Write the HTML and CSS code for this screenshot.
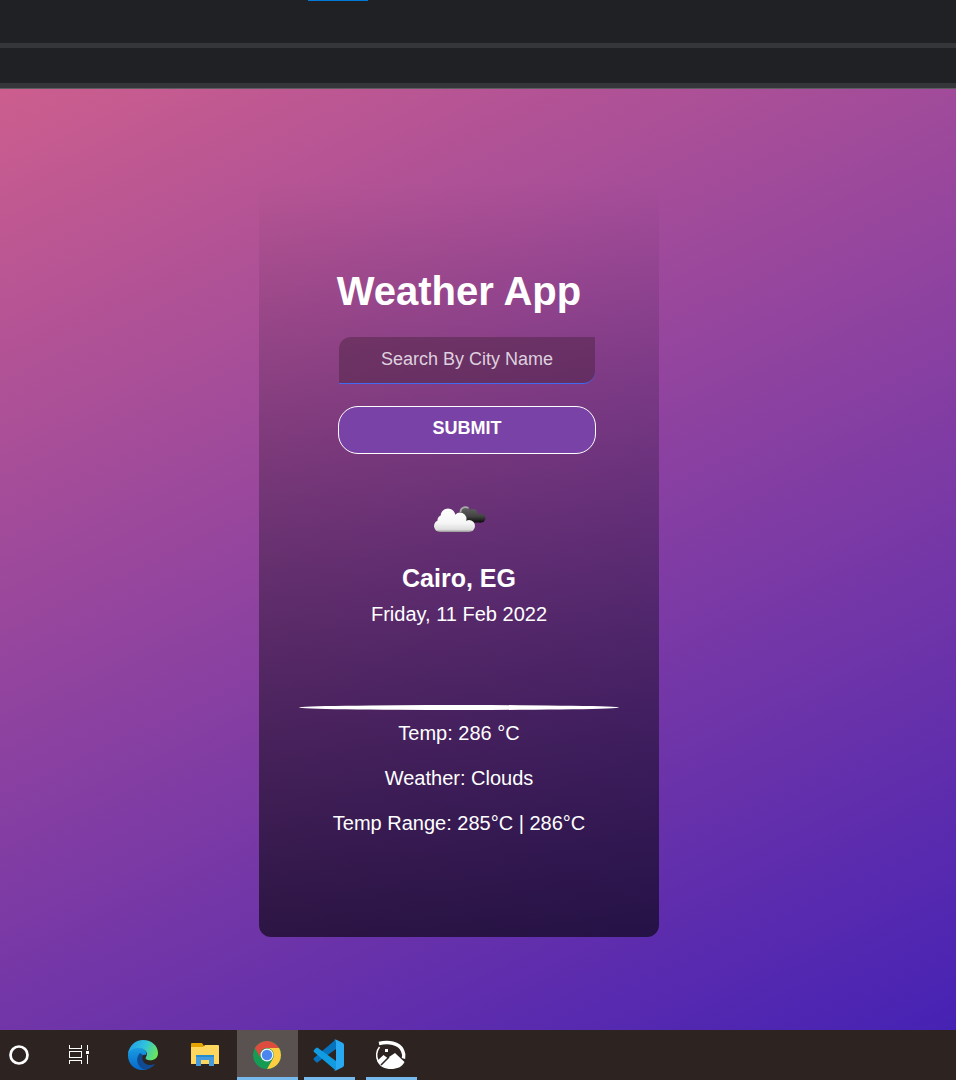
FILE: index.html
```html
<!DOCTYPE html>
<html lang="en">
<head>
<meta charset="utf-8">
<meta name="viewport" content="width=device-width, initial-scale=1">
<title>Weather App</title>
<link rel="stylesheet" href="styles.css">
</head>
<body>
<header class="browser">
  <div class="tab-strip"><span class="tab-accent"></span></div>
  <div class="toolbar"></div>
</header>
<main class="page">
  <section class="card">
    <h1 class="title">Weather App</h1>
    <form class="search">
      <input class="city-input" type="text" placeholder="Search By City Name" aria-label="Search By City Name">
      <button class="submit" type="submit">SUBMIT</button>
    </form>
    <svg class="cloud" viewBox="0 0 54 28" aria-hidden="true">
      <defs>
        <linearGradient id="dark" gradientUnits="userSpaceOnUse" x1="0" y1="1" x2="0" y2="18"><stop offset="0" stop-color="#666"/><stop offset=".6" stop-color="#444"/><stop offset="1" stop-color="#080808"/></linearGradient>
        <linearGradient id="light" gradientUnits="userSpaceOnUse" x1="0" y1="3" x2="0" y2="28"><stop offset="0" stop-color="#fff"/><stop offset=".6" stop-color="#f6f6f6"/><stop offset=".86" stop-color="#ddd"/><stop offset="1" stop-color="#777"/></linearGradient>
      </defs>
      <g fill="url(#dark)"><circle cx="33" cy="7" r="5.500"/><circle cx="41" cy="9" r="5"/><circle cx="49" cy="13" r="4.500"/><path d="M30 7h12l7 4v6.500H32z"/></g>
      <path fill="none" stroke="#aaa" stroke-width="1.800" d="M28.500 7c0-4 4-6 8-4"/>
      <g fill="url(#light)"><circle cx="16" cy="11" r="7.500"/><circle cx="8" cy="21" r="6"/><circle cx="10" cy="15" r="4.500"/><circle cx="28" cy="14" r="6.500"/><circle cx="37" cy="21" r="6"/><path d="M8 16 15 9l13 2 6 6 3 2v8H8z"/></g>
    </svg>
    <h2 class="city">Cairo, EG</h2>
    <p class="date">Friday, 11 Feb 2022</p>
    <hr class="rule">
    <div class="details">
      <p>Temp: 286 °C</p>
      <p>Weather: Clouds</p>
      <p>Temp Range: 285°C | 286°C</p>
    </div>
  </section>
</main>
<nav class="taskbar" aria-label="Taskbar">
  <button class="task cortana" type="button" aria-label="Cortana">
    <svg viewBox="0 0 32 32"><circle cx="16" cy="16" r="8.500" fill="none" stroke="#fff" stroke-width="2.700"/></svg>
  </button>
  <button class="task" type="button" aria-label="Task View">
    <svg viewBox="0 0 32 32" fill="none" stroke="#fff" shape-rendering="crispEdges"><path d="M4.500 6v3.500h12V6M4.500 25v-3.500h12V25M4.500 12.500h12v6h-12zM22.500 6v5M22.500 16v9"/><path fill="#fff" stroke="none" d="M21 12h3v3h-3z"/></svg>
  </button>
  <button class="task" type="button" aria-label="Microsoft Edge">
    <svg viewBox="0 0 32 32">
      <defs>
        <linearGradient id="edge-top" x1="0" y1=".3" x2="1" y2=".6"><stop offset="0" stop-color="#259de5"/><stop offset=".5" stop-color="#2fc2df"/><stop offset="1" stop-color="#6be657"/></linearGradient>
        <linearGradient id="edge-left" x1="0" y1="0" x2="0" y2="1"><stop stop-color="#1b9ee3"/><stop offset="1" stop-color="#0669c9"/></linearGradient>
      </defs>
      <path fill="url(#edge-left)" d="M1 15C2 8 9 7 14 9c4 1 6 4 5 7-4-1-7 2-5 7 2 4 8 6 13 2-3 4-7 6-12 6C7 31 1 24 1 17z"/>
      <path fill="#104b91" d="M13 14c-5 5-3 13 3 16 5 1 9-1 12-5-5 2-10 1-12-3-1-2-1-4 0-6z"/>
      <path fill="url(#edge-top)" d="M1 15C2 7 8 1 16 1c9 0 15 6 15 13 0 6-5 8-10 7-2-1-3-1-2-3 3-4-1-9-8-9-5 0-9 3-10 6z"/>
    </svg>
  </button>
  <button class="task" type="button" aria-label="File Explorer">
    <svg viewBox="0 0 32 32"><path fill="#e5a400" d="M2 5q0-1 1-1h10l2 3h14v6H2z"/><path fill="#ffd65e" d="M2 8h12l2-2h13q1 0 1 1v18H2z"/><path fill="#459bdd" d="M7 16h18v11h-5v-6h-8v6H7z"/><path fill="#258bd0" d="M7 16h18v2H7z"/></svg>
  </button>
  <button class="task running active" type="button" aria-label="Google Chrome">
    <svg viewBox="0 0 32 32"><circle cx="16" cy="16" r="14" fill="#169b55"/><path fill="#de4b3f" d="M3.900 9A14 14 0 0 1 28.100 9H16a7 7 0 0 0-6 10.500z"/><path fill="#ffcd40" d="M28.100 9A14 14 0 0 1 16 30l6-10.500A7 7 0 0 0 16 9z"/><circle cx="16" cy="16" r="6.500" fill="#f4f4f4"/><circle cx="16" cy="16" r="5.200" fill="#4b86ee"/></svg>
  </button>
  <button class="task running" type="button" aria-label="Visual Studio Code">
    <svg viewBox="0 0 32 32"><path fill="#0873bd" d="M23 1v9L5 23q-1 1-2 0l-2-2q-1-1 0-2L21 2z"/><path fill="#119be0" d="M23 31v-9L5 9q-1-1-2 0l-2 2q-1 1 0 2l20 17z"/><path fill="#29a9f2" d="M21 1q1-1 3 0l6 3q1 1 1 2v20q0 1-1 2l-6 3q-2 1-3 0 2 0 2-2V3q0-2-2-2z"/></svg>
  </button>
  <button class="task running" type="button" aria-label="Photos">
    <svg viewBox="0 0 32 32"><path fill="none" stroke="#fff" stroke-width="3.500" d="M4 4.500c9-2 20-1 23.500 7q2 4 1 8"/><path fill="none" stroke="#fff" stroke-width="1.500" d="M4.500 8C1 12 1 18 3 22"/><path fill="#fff" d="m2 22 6.500-6 4 3 7.500-5 9.500 9C27 28 22 30 16 30S5 28 2 22zM10 10h3v3h-3z"/><path stroke="#2d2422" stroke-width="1.600" d="m6 26 8-8"/></svg>
  </button>
</nav>
</body>
</html>
```
FILE: styles.css
```css
* { box-sizing: border-box; }

body {
  margin: 0;
  min-height: 100vh;
  display: flex;
  flex-direction: column;
  font-family: "Liberation Sans", Arial, sans-serif;
  color: #fff;
}

.browser { background: #202124; }

.tab-strip {
  height: 48px;
  padding-left: 308px;
  border-bottom: 5px solid #35363a;
}

.tab-accent {
  display: block;
  width: 60px;
  height: 1px;
  background: #0078d7;
}

.toolbar {
  height: 41px;
  border-bottom: 1px solid #5c5d60;
  box-shadow: inset 0 -5px #35363a;
}

.page {
  flex: 1;
  display: flex;
  align-items: center;
  justify-content: center;
  padding: 0 38px 2px 0;
  background: linear-gradient(155deg, #cc5e8e, #4622b4);
}

.card {
  width: 400px;
  padding: 86px 40px 102px;
  border-radius: 12px;
  display: flex;
  flex-direction: column;
  align-items: center;
  text-align: center;
  background: linear-gradient(to bottom, rgba(0, 0, 0, 0), rgba(0, 0, 0, 0.6));
}

.title {
  margin: 0;
  font-size: 40px;
  line-height: 48px;
}

.search {
  display: flex;
  flex-direction: column;
  align-items: center;
  gap: 22px;
  margin: 22px 0 0 16px;
}

.city-input {
  width: 256px;
  height: 47px;
  padding: 0 10px;
  border: 0;
  border-bottom: 1px solid #4169f1;
  border-radius: 12px 0;
  outline: 0;
  background: rgba(66, 32, 56, 0.42);
  color: #fff;
  font: 18px "Liberation Sans", Arial, sans-serif;
  text-align: center;
}

.city-input::placeholder { color: #dfd0df; }

.submit {
  width: 258px;
  height: 48px;
  padding: 0 0 2px;
  border: 1px solid #fff;
  border-radius: 20px;
  background: #7942a6;
  color: #fff;
  font: bold 18px "Liberation Sans", Arial, sans-serif;
}

.cloud {
  width: 54px;
  height: 28px;
  margin-top: 51px;
}

.city {
  margin: 30px 0 0;
  font-size: 25px;
  line-height: 30px;
}

.date {
  margin: 9px 0 0;
  font-size: 20px;
  line-height: 24px;
}

.rule {
  width: 100%;
  height: 5px;
  margin: 79px 0 0;
  border: 0;
  border-radius: 50%;
  background: #fff;
}

.details {
  display: flex;
  flex-direction: column;
  gap: 21px;
  margin-top: 11px;
  font-size: 20px;
  line-height: 24px;
}

.details p { margin: 0; }

.taskbar {
  height: 50px;
  display: flex;
  gap: 11px;
  background: #2d2422;
}

.task {
  width: 51px;
  padding: 0 1px 0 0;
  border: 0;
  border-bottom: 3px solid transparent;
  background: none;
  display: flex;
  align-items: center;
  justify-content: center;
}

.task svg {
  width: 32px;
  height: 32px;
  margin-top: 3px;
}

.cortana {
  width: 52px;
  margin-left: -7px;
}

.running { border-color: #76b9ed; }

.active {
  width: 61px;
  margin: 0 -5px;
  background: #5a5250;
}
```
